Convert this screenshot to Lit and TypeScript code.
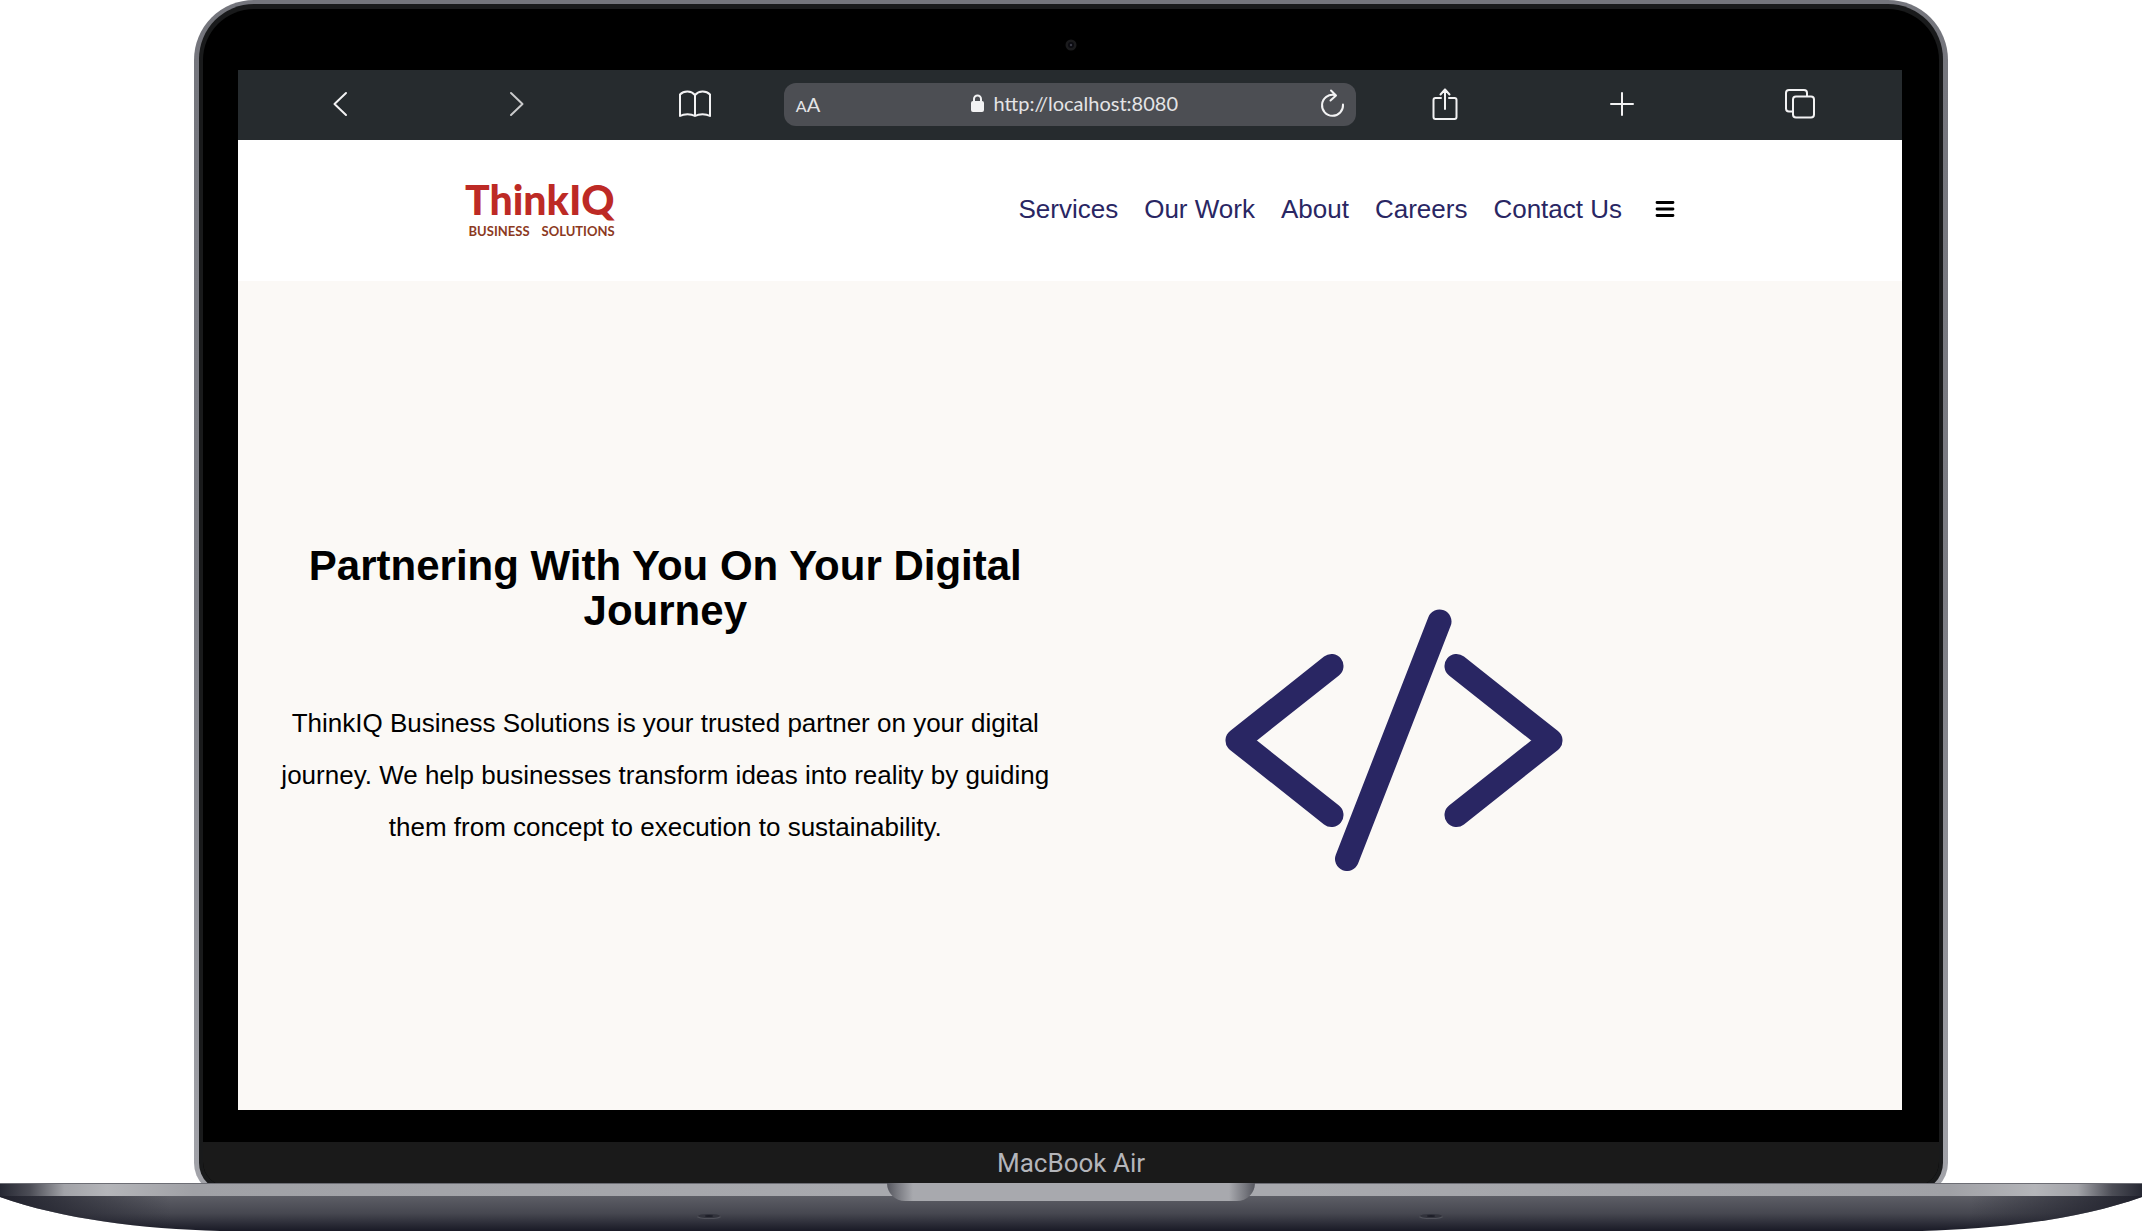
import { LitElement, html, css, svg } from "lit";
import { customElement } from "lit/decorators.js";

const links = ["Services", "Our Work", "About", "Careers", "Contact Us"];

@customElement("browser-toolbar")
class BrowserToolbar extends LitElement {
  static styles = css`
    :host {
      display: grid;
      grid-template-columns: repeat(3, 1fr) minmax(0, 572px) repeat(3, 1fr);
      align-items: center;
      height: 68px;
      padding: 0 13px 2px;
      background: #262b2e;
      color: #f2f2f3;
      font-family: Lato, "Open Sans", sans-serif;
    }
    button {
      display: flex;
      justify-content: center;
      align-items: center;
      padding: 0;
      border: 0;
      background: none;
      color: inherit;
      font: inherit;
      cursor: pointer;
    }
    svg {
      display: block;
      fill: none;
      stroke: currentColor;
      stroke-width: 2;
      stroke-linecap: round;
      stroke-linejoin: round;
    }
    .forward {
      color: #c9cacb;
    }
    .address {
      display: grid;
      grid-template-columns: 48px 1fr 48px;
      align-items: center;
      height: 43px;
      border-radius: 12px;
      background: #4c4e53;
    }
    .site {
      display: flex;
      justify-content: center;
      align-items: center;
      gap: 10px;
      padding: 0 0 2px 8px;
    }
    .url {
      width: 184px;
      padding: 0;
      border: 0;
      outline: 0;
      background: none;
      color: #e4e4e6;
      font: 20px/24px Lato, "Open Sans", sans-serif;
    }
    .size {
      align-items: baseline;
      color: #e4e4e6;
      font-size: 20px;
    }
    .small {
      font-size: 16px;
    }
  `;

  render() {
    return html`
      <button aria-label="Back">
        <svg width="32" height="32" viewBox="0 0 32 32"><path d="M22 5 10.500 16 22 27" /></svg>
      </button>
      <button class="forward" aria-label="Forward">
        <svg width="32" height="32" viewBox="0 0 32 32"><path d="M10 5 21.500 16 10 27" /></svg>
      </button>
      <button aria-label="Bookmarks">
        <svg width="34" height="32" viewBox="0 0 34 32">
          <path d="M17 7C13 2.500 6 2.500 2 6.500V28C6 25.500 13 25.500 17 28C21 25.500 28 25.500 32 28V6.500C28 2.500 21 2.500 17 7ZM17 7V28" />
        </svg>
      </button>
      <div class="address">
        <button class="size" aria-label="Text size"><span class="small">A</span><span>A</span></button>
        <div class="site">
          <svg width="13" height="18" viewBox="0 0 13 18" aria-hidden="true">
            <rect x="1" y="8" width="11" height="9" rx="1" fill="currentColor" />
            <path d="M3 8V5a3.500 3.500 0 0 1 7 0v3" />
          </svg>
          <input class="url" type="text" aria-label="Address" value="http://localhost:8080" />
        </div>
        <button aria-label="Reload">
          <svg width="32" height="32" viewBox="0 0 32 32">
            <path d="M27 16.500a10.500 10.500 0 1 1-8.500-9.500M15 2.500l5 5-5.500 5" />
          </svg>
        </button>
      </div>
      <button aria-label="Share">
        <svg width="32" height="34" viewBox="0 0 32 34">
          <path d="M12 11H6.500a2 2 0 0 0-2 2V30a2 2 0 0 0 2 2H25.500a2 2 0 0 0 2-2V13a2 2 0 0 0-2-2H20M16 22V2.500M11.500 7.500 16 2.500 20.500 7.500" />
        </svg>
      </button>
      <button aria-label="New tab">
        <svg width="32" height="32" viewBox="0 0 32 32"><path d="M16 5V27M5 16H27" /></svg>
      </button>
      <button aria-label="Tabs">
        <svg width="32" height="32" viewBox="0 0 32 32">
          <path d="M8.500 23.500H5a3 3 0 0 1-3-3V5a3 3 0 0 1 3-3H20a3 3 0 0 1 3 3V8" />
          <rect x="9" y="8.500" width="21" height="21" rx="3" />
        </svg>
      </button>
    `;
  }
}

@customElement("site-page")
class SitePage extends LitElement {
  static styles = css`
    :host {
      flex: 1;
      display: flex;
      flex-direction: column;
      background: #fff;
      color: #000;
      font-family: "Liberation Sans", Arial, sans-serif;
      font-size: 26px;
    }
    .header {
      display: flex;
      justify-content: space-between;
      align-items: center;
      height: 137px;
      padding: 0 227px 4px;
    }
    .logo {
      display: flex;
      flex-direction: column;
      align-items: flex-end;
      gap: 4px;
      color: #bd2a25;
      font-family: Lato, "Open Sans", sans-serif;
      text-decoration: none;
    }
    .name {
      font-size: 41px;
      font-weight: 900;
      line-height: 40px;
    }
    .tagline {
      display: flex;
      gap: 12px;
      color: #8c3a1e;
      font-size: 13px;
      font-weight: 700;
      line-height: 14px;
    }
    .nav {
      display: flex;
      align-items: center;
      gap: 26px;
    }
    .link {
      color: #292663;
      line-height: 32px;
      text-decoration: none;
    }
    .menu {
      display: flex;
      margin-left: 7px;
      padding: 0;
      border: 0;
      background: none;
      color: #000;
      cursor: pointer;
    }
    .hero {
      flex: 1;
      display: grid;
      grid-template-columns: 49fr 40fr 11fr;
      align-items: center;
      padding-left: 26px;
      background: #fbf9f6;
    }
    .copy {
      padding-top: 4px;
      text-align: center;
    }
    .title {
      margin: 0 0 64px;
      font-size: 42px;
      line-height: 45px;
    }
    .lead {
      margin: 0;
      line-height: 52px;
    }
    .code {
      justify-self: center;
      margin-top: 88px;
    }
  `;

  render() {
    return html`
      <header class="header">
        <a class="logo" href="#home">
          <span class="name">ThinkIQ</span>
          <span class="tagline"><span>BUSINESS</span><span>SOLUTIONS</span></span>
        </a>
        <nav class="nav">
          ${links.map((l) => html`<a class="link" href="#${l.toLowerCase().replace(" ", "-")}">${l}</a>`)}
          <button class="menu" aria-label="Menu">
            <svg width="20" height="18" viewBox="0 0 20 18" stroke="currentColor" stroke-width="2.800" stroke-linecap="round">
              <path d="M2 2.500H18M2 9H18M2 15.500H18" />
            </svg>
          </button>
        </nav>
      </header>
      <main class="hero">
        <div class="copy">
          <h1 class="title">Partnering With You On Your Digital Journey</h1>
          <p class="lead">
            ThinkIQ Business Solutions is your trusted partner on your digital journey. We help businesses
            transform ideas into reality by guiding them from concept to execution to sustainability.
          </p>
        </div>
        <svg class="code" width="338" height="262" viewBox="0 0 338 262" fill="none" stroke="#292663"
          stroke-width="24" stroke-linecap="round" stroke-linejoin="round" aria-hidden="true">
          <path d="M106.500 57 12.500 131.500 106.500 206M231.500 57 325.500 131.500 231.500 206M214.500 12.500 122 250" />
        </svg>
      </main>
    `;
  }
}

@customElement("app-root")
class AppRoot extends LitElement {
  static styles = css`
    :host {
      display: flex;
      flex-direction: column;
      min-height: 100vh;
      background: #fff;
      overflow: hidden;
    }
    .lid {
      flex: 1;
      display: flex;
      margin: 0 194px -12px;
      padding: 4px 5px;
      border-radius: 60px 60px 32px 32px;
      background: linear-gradient(#74757c, #7c7d84 50%, #a3a4aa);
    }
    .rim {
      flex: 1;
      display: flex;
      padding: 5px 4px;
      border-radius: 55px 55px 28px 28px;
      background: #191a1b;
    }
    .bezel {
      flex: 1;
      display: flex;
      flex-direction: column;
      border-radius: 51px 51px 24px 24px;
      background: #000;
      overflow: hidden;
    }
    .top {
      display: flex;
      justify-content: center;
      align-items: center;
      height: 61px;
    }
    .camera {
      margin-top: 10px;
    }
    .screen {
      flex: 1;
      display: flex;
      flex-direction: column;
      margin: 0 37px 32px 35px;
    }
    .chin {
      height: 44px;
      background: #1a1a1a;
      color: #b4b5ba;
      font: 26px/42px Roboto, "Liberation Sans", sans-serif;
      text-align: center;
    }
    .base {
      position: relative;
      height: 48px;
    }
    .body {
      display: block;
      width: 100%;
      height: 48px;
    }
    .notch {
      position: absolute;
      top: 0;
      left: 50%;
      width: 368px;
      height: 18px;
      margin-left: -184px;
      border-radius: 0 0 20px 20px;
      background: linear-gradient(90deg, #55565e, #77787f 10px, #a8a9ae 26px, #a8a9ae 342px, #77787f 358px, #55565e);
    }
  `;

  private foot(x: number) {
    return svg`
      <ellipse cx=${x} cy="34" rx="12" ry="2" fill="#50515a" />
      <ellipse cx=${x} cy="33" rx="11" ry="2" fill="#32333c" />
      <ellipse cx=${x} cy="33" rx="4" ry="1" fill="#1e1f28" />
    `;
  }

  render() {
    return html`
      <div class="lid">
        <div class="rim">
          <div class="bezel">
            <div class="top">
              <svg class="camera" width="12" height="12" viewBox="0 0 12 12" aria-hidden="true">
                <circle cx="6" cy="6" r="5.500" fill="#1b1b1d" />
                <circle cx="6" cy="6" r="3" fill="#0b0b10" />
                <circle cx="6" cy="6" r="1.200" fill="#3a3b46" />
              </svg>
            </div>
            <div class="screen">
              <browser-toolbar></browser-toolbar>
              <site-page></site-page>
            </div>
            <div class="chin">MacBook Air</div>
          </div>
        </div>
      </div>
      <div class="base">
        <svg class="body" viewBox="0 0 2142 48" preserveAspectRatio="none" aria-hidden="true">
          <defs>
            <clipPath id="shape">
              <path d="M0 0H2142V14C2080 36 2000 46 1922 48H220C142 46 62 36 0 14Z" />
            </clipPath>
            <linearGradient id="edge">
              <stop offset="0" stop-color="#262833" />
              <stop offset="0.014" stop-color="#4c4d56" />
              <stop offset="0.030" stop-color="#a2a3a8" />
              <stop offset="0.050" stop-color="#b4b5b9" />
              <stop offset="0.090" stop-color="#a0a1a6" />
              <stop offset="0.400" stop-color="#a8a9ae" />
              <stop offset="0.600" stop-color="#a8a9ae" />
              <stop offset="0.910" stop-color="#a0a1a6" />
              <stop offset="0.950" stop-color="#b4b5b9" />
              <stop offset="0.970" stop-color="#a2a3a8" />
              <stop offset="0.986" stop-color="#4c4d56" />
              <stop offset="1" stop-color="#262833" />
            </linearGradient>
            <linearGradient id="under" x2="0" y2="1">
              <stop offset="0" stop-color="#5d5e66" />
              <stop offset="0.500" stop-color="#464750" />
              <stop offset="1" stop-color="#191a26" />
            </linearGradient>
            <linearGradient id="shade">
              <stop offset="0" stop-color="#20212c" />
              <stop offset="0.080" stop-color="#20212c" stop-opacity="0" />
              <stop offset="0.920" stop-color="#20212c" stop-opacity="0" />
              <stop offset="1" stop-color="#20212c" />
            </linearGradient>
          </defs>
          <g clip-path="url(#shape)">
            <rect width="2142" height="13" fill="url(#edge)" />
            <rect width="2142" height="1" fill="#6d6e75" />
            <rect y="13" width="2142" height="35" fill="url(#under)" />
            <rect y="13" width="2142" height="35" fill="url(#shade)" />
            ${this.foot(709)} ${this.foot(1431)}
          </g>
        </svg>
        <div class="notch"></div>
      </div>
    `;
  }
}
